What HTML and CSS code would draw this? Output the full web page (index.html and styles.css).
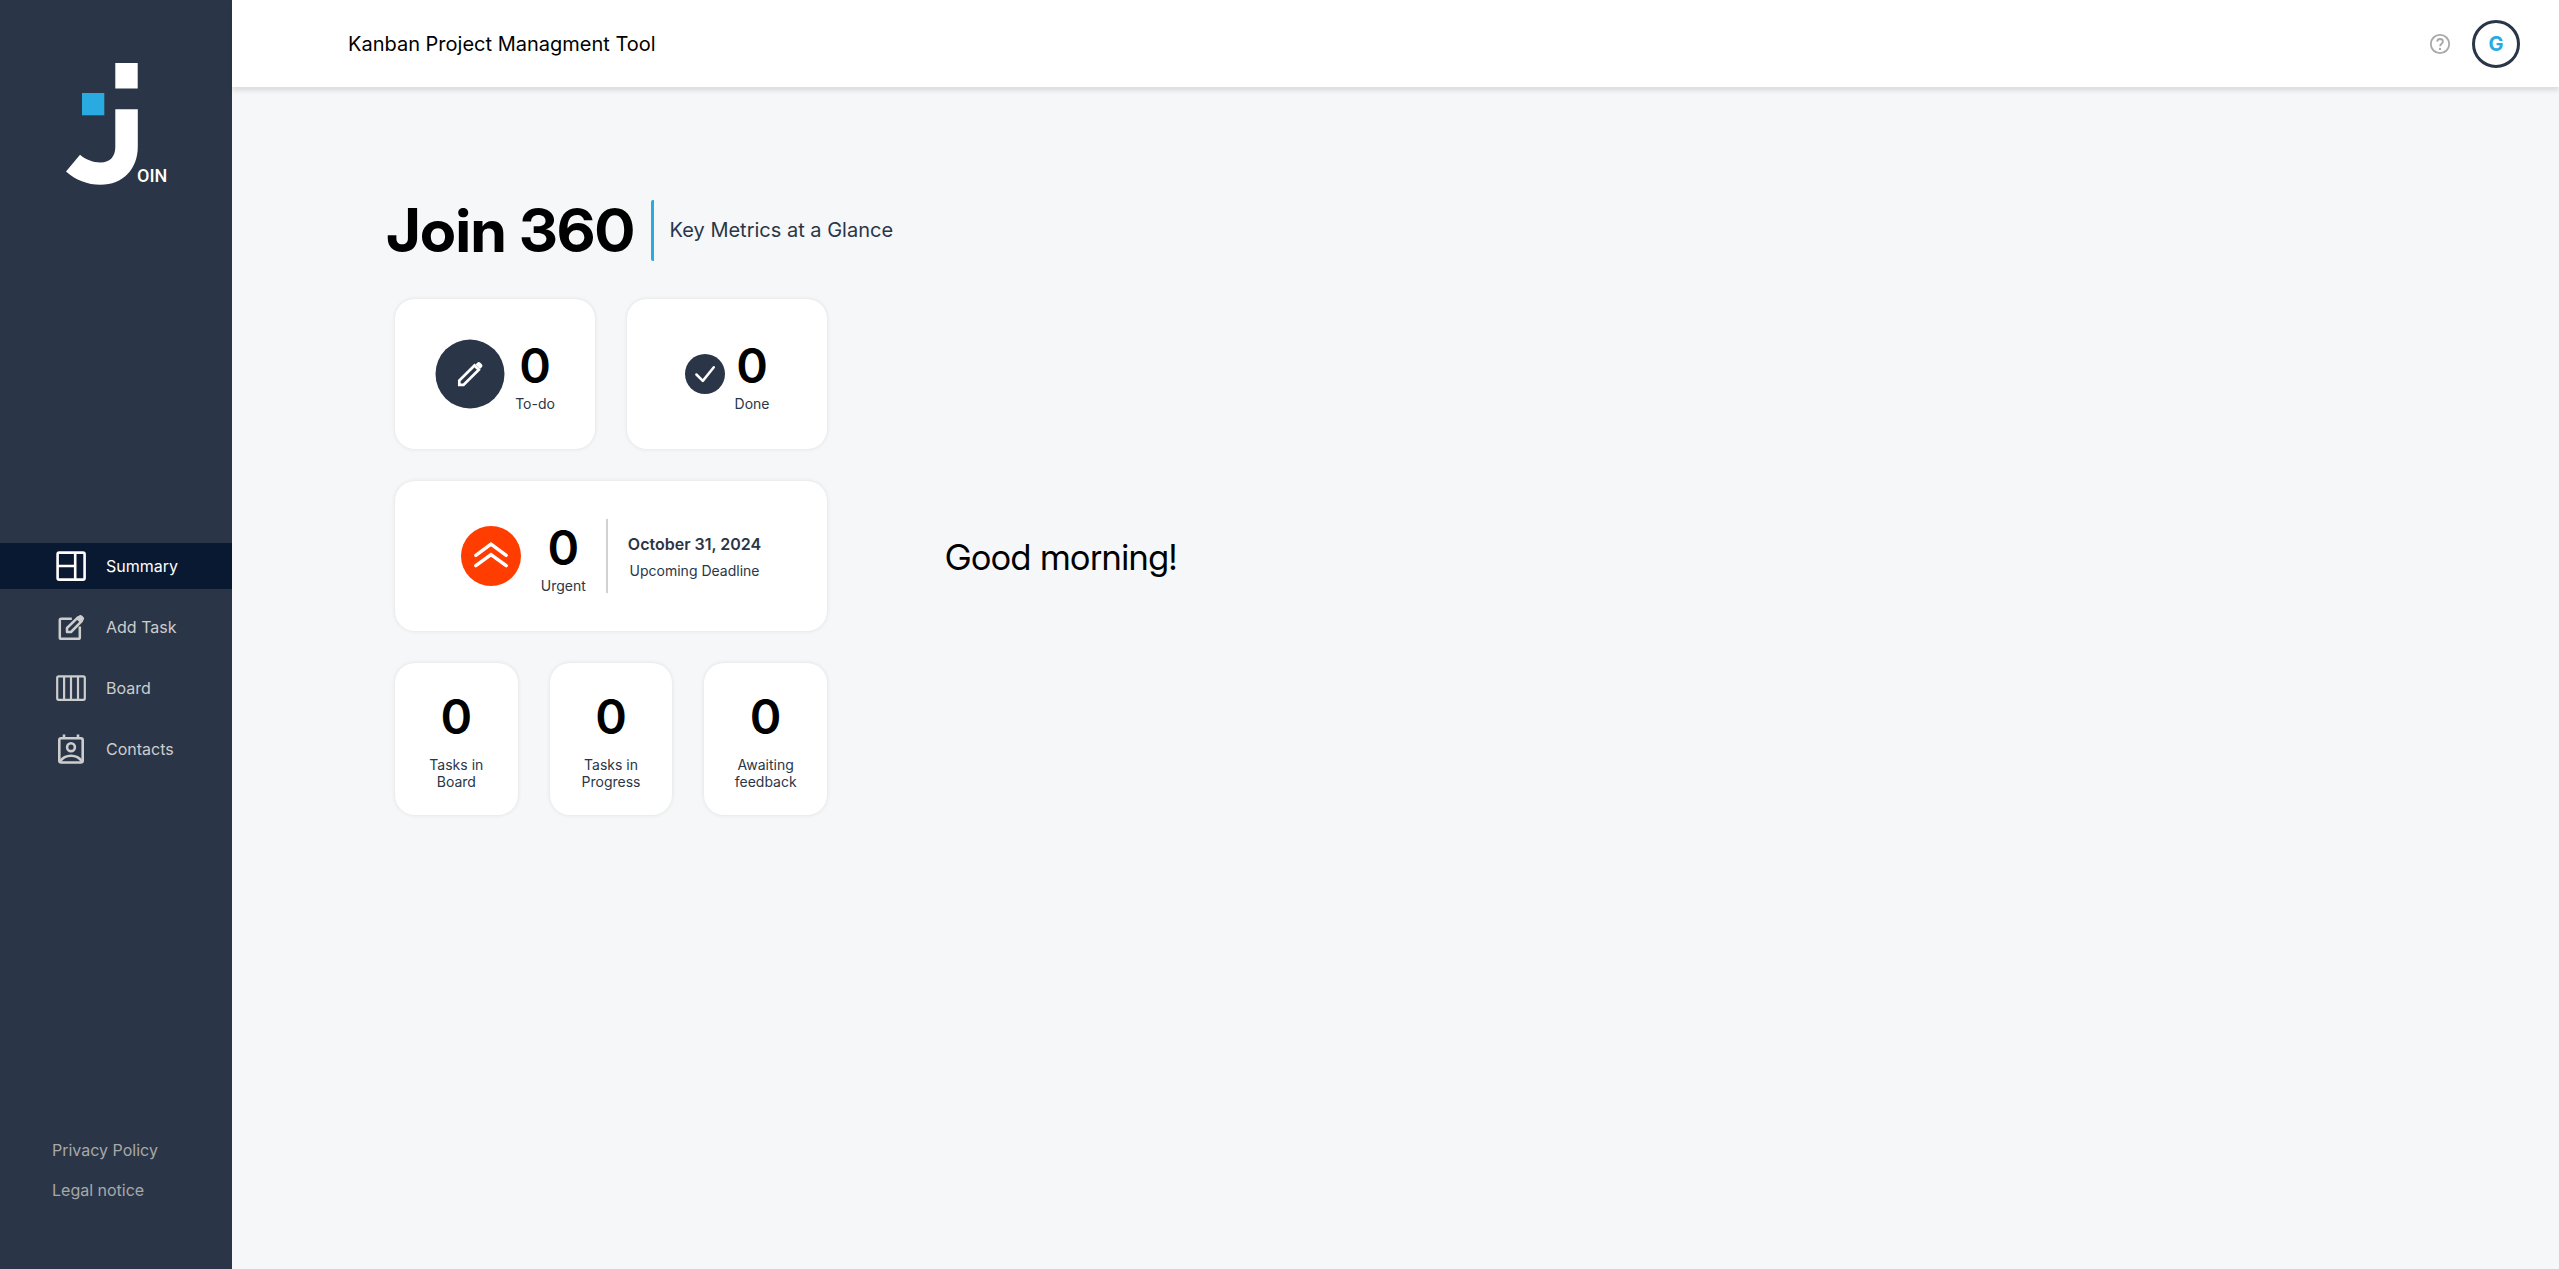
FILE: index.html
```html
<!DOCTYPE html>
<html lang="en">
<head>
<meta charset="utf-8">
<meta name="viewport" content="width=device-width, initial-scale=1">
<title>Join - Summary</title>
<link rel="stylesheet" href="styles.css">
</head>
<body>
<div class="app">
  <aside class="sidebar">
    <svg class="logo" width="100" height="122" viewBox="0 0 100 122" role="img" aria-label="Join">
      <rect x="49.3" y="0" width="22.4" height="25.5" fill="#fff"/>
      <rect x="16" y="30" width="22.3" height="22.3" fill="#29abe2"/>
      <path d="M49.3 46.2H71.8V83.5C71.8 106 57 121.8 34.5 121.8C21.5 121.8 9.5 117 0 108.5L14 91.8C19.5 96.5 26.500 99.5 34.5 99.5C44.5 99.5 49.3 93 49.3 84Z" fill="#fff"/>
      <text class="logo-text" x="71" y="119">OIN</text>
    </svg>
    <nav class="menu" aria-label="Main">
      <a class="menu-item active" href="#summary">
        <svg width="32" height="32" viewBox="0 0 32 32" fill="none" stroke="currentColor" stroke-width="2.6"><rect x="2.6" y="2.6" width="27" height="27" rx="1.6"/><path d="M20.2 2.6v27M2.6 16H20.2"/></svg>
        Summary
      </a>
      <a class="menu-item" href="#add-task">
        <svg width="32" height="32" viewBox="0 0 32 32" fill="none" stroke="currentColor" stroke-width="2.5" stroke-linejoin="round"><path d="M16.8 7.8H6.2a1.4 1.4 0 0 0-1.4 1.4v17.2a1.4 1.4 0 0 0 1.4 1.4h17.2a1.4 1.4 0 0 0 1.4-1.4V15.6"/><path d="M12 21v-4L23 6.4l3.7 3.8L16 21Z"/><path fill="currentColor" stroke-width="1.4" d="M21.8 7.6l2.2-2.2c.9-.9 1.9-.9 2.8 0l.9.9c.9.9.9 1.9 0 2.8l-2.2 2.2Z"/></svg>
        Add Task
      </a>
      <a class="menu-item" href="#board">
        <svg width="32" height="32" viewBox="0 0 32 32" fill="none" stroke="currentColor" stroke-width="2.2"><rect x="2.2" y="4.4" width="27.6" height="23.4" rx="1.5"/><path d="M9.1 4.4v23.4M16 4.4v23.4M23 4.4v23.4"/></svg>
        Board
      </a>
      <a class="menu-item" href="#contacts">
        <svg width="32" height="32" viewBox="0 0 32 32" fill="none" stroke="currentColor" stroke-width="2.6"><rect x="4.3" y="5.3" width="23.4" height="24.2" rx="1.8"/><path d="M9 1.5v4M23 1.5v4"/><circle cx="16" cy="14.2" r="3.9"/><path d="M5 28.6c2.6-4 6.6-5.8 11-5.8s8.4 1.8 11 5.8"/></svg>
        Contacts
      </a>
    </nav>
    <div class="legal">
      <a href="#privacy">Privacy Policy</a>
      <a href="#legal">Legal notice</a>
    </div>
  </aside>

  <div class="page">
    <header class="topbar">
      <p class="tagline">Kanban Project Managment Tool</p>
      <div class="actions">
        <a class="help" href="#help" aria-label="Help">
          <svg width="24" height="24" viewBox="0 0 24 24" fill="none" stroke="currentColor" stroke-width="1.8"><circle cx="12" cy="12" r="9.2"/><path d="M9.2 9.6C9.3 7.9 10.5 7 12 7c1.7 0 2.9 1 2.9 2.5 0 2.2-2.8 2.3-2.8 4.8"/><circle cx="12" cy="16.9" r="1.2" fill="currentColor" stroke="none"/></svg>
        </a>
        <button class="avatar" type="button" aria-label="Guest account">G</button>
      </div>
    </header>

    <main class="summary">
      <div class="headline">
        <h1>Join 360</h1>
        <p>Key Metrics at a Glance</p>
      </div>
      <div class="content">
        <div class="metrics">
          <div class="row">
            <a class="card" href="#board">
              <svg class="icon" width="70" height="70" viewBox="0 0 70 70"><circle cx="35" cy="35" r="34.5" fill="#2a3647"/><path d="M24.3 45.9v-4.3L39.5 26.5l4.3 4.2L28.5 45.9Z" fill="none" stroke="#fff" stroke-width="2.7"/><path d="M40.4 25.6l1.9-1.9c.9-.9 2.1-.9 3 0l1.5 1.5c.9.9.9 2.1 0 3l-1.9 1.9Z" fill="#fff"/></svg>
              <span class="metric"><strong>0</strong><span>To-do</span></span>
            </a>
            <a class="card" href="#board">
              <svg class="icon" width="40" height="40" viewBox="0 0 40 40"><circle cx="20" cy="20" r="20" fill="#2a3647"/><path d="M11.4 20.5l6.4 6.4L28.8 13.2" fill="none" stroke="#fff" stroke-width="2.5" stroke-linecap="round" stroke-linejoin="round"/></svg>
              <span class="metric"><strong>0</strong><span>Done</span></span>
            </a>
          </div>
          <div class="row">
            <a class="card urgent" href="#board">
              <svg class="icon" width="60" height="60" viewBox="0 0 60 60"><circle cx="30" cy="30" r="30" fill="#ff3d00"/><path d="M14.8 29.3L30 18.2l15.2 11.1M14.8 39.7L30 28.6l15.2 11.1" fill="none" stroke="#fff" stroke-width="3.5" stroke-linecap="round" stroke-linejoin="miter"/></svg>
              <span class="metric"><strong>0</strong><span>Urgent</span></span>
              <span class="deadline"><time datetime="2024-10-31">October 31, 2024</time><span>Upcoming Deadline</span></span>
            </a>
          </div>
          <div class="row">
            <a class="card count" href="#board"><span class="metric"><strong>0</strong><span>Tasks in Board</span></span></a>
            <a class="card count" href="#board"><span class="metric"><strong>0</strong><span>Tasks in Progress</span></span></a>
            <a class="card count" href="#board"><span class="metric"><strong>0</strong><span>Awaiting feedback</span></span></a>
          </div>
        </div>
        <p class="greeting">Good morning!</p>
      </div>
    </main>
  </div>
</div>
</body>
</html>
```

FILE: styles.css
```css
* {
  box-sizing: border-box;
  margin: 0;
}

body {
  font-family: Inter, "Liberation Sans", sans-serif;
  font-size: 16px;
  color: #000;
  background: #f6f7f8;
}

a {
  color: inherit;
  text-decoration: none;
}

svg {
  display: block;
  flex: none;
}

.app {
  display: flex;
  min-height: 100vh;
}

/* Sidebar */
.sidebar {
  display: flex;
  flex-direction: column;
  justify-content: space-between;
  flex: none;
  width: 232px;
  padding: 63px 0 59px;
  background: #2a3647;
}

.logo {
  align-self: center;
  overflow: visible;
}

.logo-text {
  font: 500 18px Roboto, sans-serif;
  fill: #fff;
}

.menu {
  display: flex;
  flex-direction: column;
  gap: 15px;
}

.menu-item {
  display: flex;
  align-items: center;
  gap: 19px;
  height: 46px;
  padding-left: 55px;
  color: #cdcdcd;
}

.menu-item.active {
  color: #fff;
  background: #091931;
}

.legal {
  display: flex;
  flex-direction: column;
  padding-left: 52px;
  line-height: 40px;
  color: #a8a8a8;
}

/* Top bar */
.page {
  flex: 1;
  min-width: 0;
}

.topbar {
  display: flex;
  align-items: center;
  justify-content: space-between;
  height: 87px;
  padding: 0 39px 0 116px;
  background: #fff;
  box-shadow: 0 4px 4px rgba(0, 0, 0, 0.1);
}

.tagline {
  font-size: 20px;
}

.actions {
  display: flex;
  align-items: center;
  gap: 20px;
}

.help {
  color: #a8a8a8;
}

.avatar {
  width: 48px;
  height: 48px;
  padding: 0;
  border: 3px solid #2a3647;
  border-radius: 50%;
  font: bold 20px Inter, sans-serif;
  color: #29abe2;
  background: #fff;
}

/* Summary */
.summary {
  display: flex;
  flex-direction: column;
  gap: 32px;
  padding: 106px 40px 40px 154px;
}

.headline {
  display: flex;
  align-items: center;
  gap: 16px;
}

.headline h1 {
  font-family: "Inter Display", Inter, sans-serif;
  font-size: 61px;
  font-weight: 700;
  line-height: 74px;
}

.headline p {
  padding-left: 16px;
  border-left: 3px solid #29abe2;
  border-radius: 2px;
  font-size: 20px;
  line-height: 61px;
  color: #2a3647;
}

.content {
  display: flex;
  align-items: center;
  gap: 118px;
  padding-left: 9px;
}

.metrics {
  display: flex;
  flex-direction: column;
  gap: 32px;
  width: 432px;
}

.row {
  display: flex;
  gap: 32px;
}

.card {
  display: flex;
  flex: 1;
  align-items: center;
  justify-content: center;
  gap: 10px;
  min-height: 150px;
  border-radius: 20px;
  background: #fff;
  box-shadow: 0 0 4px rgba(0, 0, 0, 0.1);
}

.card.urgent {
  gap: 20px;
}

.card.count {
  min-height: 152px;
}

.metric {
  display: flex;
  flex-direction: column;
  align-items: center;
  font-size: 14px;
  line-height: 17px;
  text-align: center;
  color: #2a3647;
}

.metric strong {
  font-size: 48px;
  font-weight: 600;
  line-height: 58px;
  color: #000;
}

.count .metric {
  gap: 10px;
  padding: 0 24px;
}

.deadline {
  display: flex;
  flex-direction: column;
  align-items: center;
  justify-content: center;
  gap: 8px;
  min-height: 74px;
  padding-left: 20px;
  border-left: 2px solid #d1d1d1;
  font-size: 14px;
  line-height: 17px;
  color: #2a3647;
}

.deadline time {
  font-size: 16px;
  font-weight: 600;
  line-height: 20px;
}

.greeting {
  font-family: "Inter Display", Inter, sans-serif;
  font-size: 36px;
}
```
